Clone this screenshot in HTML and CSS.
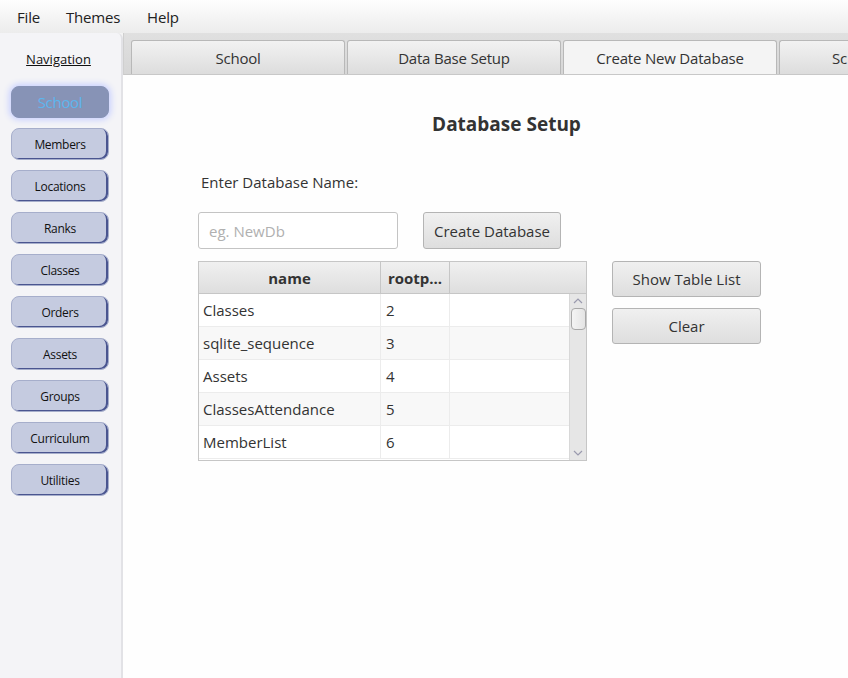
FILE: index.html
```html
<!DOCTYPE html>
<html>
<head>
<meta charset="utf-8">
<link rel="stylesheet" href="styles.css">
</head>
<body>
<div class="menubar">
  <span class="menu-item">File</span>
  <span class="menu-item">Themes</span>
  <span class="menu-item">Help</span>
</div>
<div class="main">
  <aside class="sidebar">
    <div class="nav-title">Navigation</div>
    <div class="nav-list">
      <div class="nav-btn active">School</div>
      <div class="nav-btn">Members</div>
      <div class="nav-btn">Locations</div>
      <div class="nav-btn">Ranks</div>
      <div class="nav-btn">Classes</div>
      <div class="nav-btn">Orders</div>
      <div class="nav-btn">Assets</div>
      <div class="nav-btn">Groups</div>
      <div class="nav-btn">Curriculum</div>
      <div class="nav-btn">Utilities</div>
    </div>
  </aside>
  <section class="tabpane">
    <div class="tabs">
      <div class="tab">School</div>
      <div class="tab">Data Base Setup</div>
      <div class="tab selected">Create New Database</div>
      <div class="tab last"><span class="tab-clip">Sc</span></div>
    </div>
    <div class="content">
      <h1 class="title">Database Setup</h1>
      <div class="label">Enter Database Name:</div>
      <div class="create-row">
        <div class="input">eg. NewDb</div>
        <div class="btn create-btn">Create Database</div>
      </div>
      <div class="table-row">
        <div class="table">
          <div class="thead">
            <div class="th c1">name</div>
            <div class="th c2">rootp...</div>
            <div class="th c3"></div>
          </div>
          <div class="tbody">
            <div class="rows">
              <div class="tr"><div class="td c1">Classes</div><div class="td c2">2</div><div class="td c3"></div></div>
              <div class="tr odd"><div class="td c1">sqlite_sequence</div><div class="td c2">3</div><div class="td c3"></div></div>
              <div class="tr"><div class="td c1">Assets</div><div class="td c2">4</div><div class="td c3"></div></div>
              <div class="tr odd"><div class="td c1">ClassesAttendance</div><div class="td c2">5</div><div class="td c3"></div></div>
              <div class="tr"><div class="td c1">MemberList</div><div class="td c2">6</div><div class="td c3"></div></div>
            </div>
            <div class="scrollbar">
              <svg class="arrow" width="10" height="6" viewBox="0 0 10 6"><path d="M1 5 L5 1 L9 5" fill="none" stroke="#9a9aae" stroke-width="1.2"/></svg>
              <div class="thumb"></div>
              <div class="track"></div>
              <svg class="arrow" width="10" height="6" viewBox="0 0 10 6"><path d="M1 1 L5 5 L9 1" fill="none" stroke="#9a9aae" stroke-width="1.2"/></svg>
            </div>
          </div>
        </div>
        <div class="side-btns">
          <div class="btn side-btn">Show Table List</div>
          <div class="btn side-btn">Clear</div>
        </div>
      </div>
    </div>
  </section>
</div>
</body>
</html>
```
FILE: styles.css
```css
* { box-sizing: border-box; }
html, body { margin: 0; padding: 0; }
body {
  width: 848px;
  height: 678px;
  overflow: hidden;
  font-family: "Open Sans", "Noto Sans", sans-serif;
  color: #333;
  background: #f4f4f4;
}
.menubar {
  height: 33px;
  display: flex;
  align-items: center;
  padding-left: 17px;
  background: linear-gradient(#fefefe, #ececec);
  font-size: 15px;
  color: #222;
}
.menu-item { margin-right: 26px; letter-spacing: -0.2px; }
.menu-item:nth-child(2) { margin-right: 27px; }
.main {
  display: flex;
  height: 645px;
}
.sidebar {
  width: 123px;
  background: #f4f4f7;
  border-right: 2px solid #e2e2e6;
  border-top-right-radius: 6px;
  display: flex;
  flex-direction: column;
  align-items: flex-start;
}
.nav-title {
  font-size: 13px;
  text-decoration: underline;
  color: #111;
  width: 117px;
  text-align: center;
  margin-top: 17px;
  height: 20px;
}
.nav-list {
  display: flex;
  flex-direction: column;
  gap: 10px;
  margin-top: 16px;
  padding-left: 11px;
}
.nav-btn {
  width: 98px;
  height: 32px;
  border-radius: 8px;
  background: #c5cbe0;
  border: 1px solid #a6aecb;
  box-shadow: inset -2px -1px 0 #4a5590;
  display: flex;
  align-items: center;
  justify-content: center;
  font-size: 12px;
  color: #111;
  letter-spacing: -0.3px;
}
.nav-btn.active {
  background: #8793b6;
  border-color: #8793b6;
  box-shadow: 0 0 6px 2px #c8d0ff;
  color: #5cb6ee;
  font-size: 15px;
}
.tabpane {
  flex: 1;
  display: flex;
  flex-direction: column;
  min-width: 0;
}
.tabs {
  height: 42px;
  display: flex;
  gap: 2px;
  padding: 7px 0 0 7px;
  background: linear-gradient(#e0e0e0, #d6d6d6);
  border-bottom: 1px solid #c8c8c8;
  overflow: hidden;
  border-left: 1px solid #cfcfcf;
}
.tab {
  flex: 0 0 214px;
  height: 35px;
  border: 1px solid #b8b8b8;
  border-bottom: none;
  border-radius: 3px 3px 0 0;
  background: linear-gradient(#f2f2f2, #dcdcdc);
  display: flex;
  align-items: center;
  justify-content: center;
  font-size: 15px;
  color: #333;
  letter-spacing: -0.2px;
  white-space: nowrap;
  overflow: hidden;
}
.tab.last { flex: 0 0 70px; justify-content: flex-end; padding-right: 2px; border-right: none; border-radius: 3px 0 0 0; }
.tab.selected { background: #f4f4f4; }
.content {
  flex: 1;
  background: #fefefe;
  padding-left: 75px;
}
.title {
  margin: 35px 0 0 0;
  width: 617px;
  text-align: center;
  font-size: 19px;
  font-weight: 700;
  color: #333;
  height: 28px;
  line-height: 28px;
}
.label {
  margin-top: 34px;
  margin-left: 3px;
  font-size: 15px;
  color: #333;
  height: 20px;
  line-height: 20px;
}
.create-row {
  display: flex;
  gap: 25px;
  margin-top: 20px;
}
.input {
  width: 200px;
  height: 37px;
  border: 1px solid #c4c4c4;
  border-radius: 3px;
  background: #fff;
  color: #b0b0b0;
  font-size: 15px;
  display: flex;
  align-items: center;
  padding-left: 10px;
}
.btn {
  height: 37px;
  border: 1px solid #b4b4b4;
  border-radius: 3px;
  background: linear-gradient(#f0f0f0, #dedede);
  display: flex;
  align-items: center;
  justify-content: center;
  font-size: 15px;
  color: #333;
}
.create-btn { width: 138px; }
.table-row {
  display: flex;
  gap: 25px;
  margin-top: 12px;
}
.table {
  width: 389px;
  height: 200px;
  border: 1px solid #c6c6c6;
  background: #fff;
  display: flex;
  flex-direction: column;
}
.thead {
  height: 32px;
  display: flex;
  background: linear-gradient(#f0f0f0, #dedede);
  border-bottom: 1px solid #c6c6c6;
}
.th {
  font-size: 15px;
  font-weight: 700;
  color: #333;
  display: flex;
  align-items: center;
  justify-content: center;
  border-right: 1px solid #c6c6c6;
}
.th.c3 { border-right: none; }
.c1 { width: 182px; flex: 0 0 182px; }
.c2 { width: 69px; flex: 0 0 69px; }
.c3 { flex: 1; }
.tbody {
  flex: 1;
  display: flex;
  overflow: hidden;
}
.rows { flex: 1; display: flex; flex-direction: column; }
.tr {
  height: 33px;
  flex: 0 0 33px;
  display: flex;
  border-bottom: 1px solid #ececec;
  background: #fff;
}
.tr.odd { background: #f8f8f8; }
.td {
  font-size: 15px;
  color: #333;
  display: flex;
  align-items: center;
  padding-left: 4px;
  border-right: 1px solid #ececec;
}
.td.c2 { padding-left: 5px; }
.td.c3 { border-right: none; }
.scrollbar {
  width: 17px;
  background: #e6e6e6;
  border-left: 1px solid #d8d8d8;
  display: flex;
  flex-direction: column;
  align-items: center;
}
.arrow { margin-top: 4px; flex: 0 0 auto; }
.arrow:last-child { margin-top: 0; margin-bottom: 4px; }
.thumb {
  width: 15px;
  height: 22px;
  margin-top: 4px;
  border: 1px solid #a8a8a8;
  border-radius: 4px;
  background: linear-gradient(90deg, #f4f4f4, #e4e4e4);
}
.track { flex: 1; }
.side-btns {
  display: flex;
  flex-direction: column;
  gap: 11px;
}
.side-btn { width: 149px; height: 36px; }
```
